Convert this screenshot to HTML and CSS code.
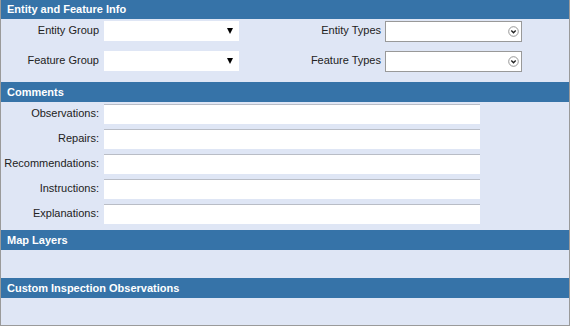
FILE: index.html
```html
<!DOCTYPE html>
<html>
<head>
<meta charset="utf-8">
<link rel="stylesheet" href="styles.css">
</head>
<body>
<div class="panel">
  <div class="hdr hdr-first">Entity and Feature Info</div>
  <div class="entity-grid">
    <div class="lbl">Entity Group</div>
    <div class="sel"><span class="tri"></span></div>
    <div class="lbl lbl-r">Entity Types</div>
    <div class="msel"><svg width="11" height="11" viewBox="0 0 11 11"><circle cx="5.5" cy="5.5" r="4.8" fill="#fff" stroke="#8a8a8a" stroke-width="0.9"/><path d="M3.3 4.6 L5.5 6.8 L7.7 4.6" fill="none" stroke="#222" stroke-width="1.4"/></svg></div>
    <div class="lbl">Feature Group</div>
    <div class="sel"><span class="tri"></span></div>
    <div class="lbl lbl-r">Feature Types</div>
    <div class="msel"><svg width="11" height="11" viewBox="0 0 11 11"><circle cx="5.5" cy="5.5" r="4.8" fill="#fff" stroke="#8a8a8a" stroke-width="0.9"/><path d="M3.3 4.6 L5.5 6.8 L7.7 4.6" fill="none" stroke="#222" stroke-width="1.4"/></svg></div>
  </div>
  <div class="hdr">Comments</div>
  <div class="comments">
    <div class="lbl">Observations:</div><div class="inp"></div>
    <div class="lbl">Repairs:</div><div class="inp"></div>
    <div class="lbl">Recommendations:</div><div class="inp"></div>
    <div class="lbl">Instructions:</div><div class="inp"></div>
    <div class="lbl">Explanations:</div><div class="inp"></div>
  </div>
  <div class="hdr">Map Layers</div>
  <div class="empty empty-a"></div>
  <div class="hdr">Custom Inspection Observations</div>
  <div class="empty empty-b"></div>
</div>
</body>
</html>
```
FILE: styles.css
```css
html, body {
  margin: 0;
  padding: 0;
  background: #ffffff;
}
.panel {
  width: 570px;
  height: 326px;
  box-sizing: border-box;
  border: 1px solid #9a9a9a;
  border-top: none;
  background: #dfe6f5;
  font-family: "Liberation Sans", Arial, sans-serif;
  font-size: 11px;
  color: #222;
  display: flex;
  flex-direction: column;
}
.hdr {
  height: 20px;
  line-height: 20px;
  background: #3673a8;
  color: #fff;
  font-weight: bold;
  padding-left: 6px;
}
.hdr-first {
  height: 19px;
  line-height: 18px;
}
.entity-grid {
  display: grid;
  grid-template-columns: 103px 135px 146px 137px;
  grid-auto-rows: 20px;
  row-gap: 10px;
  padding: 2px 0 11px;
}
.lbl {
  text-align: right;
  padding-right: 5px;
  line-height: 19px;
  white-space: nowrap;
}
.lbl-r {
  padding-right: 4px;
}
.sel {
  background: #fff;
  display: flex;
  align-items: center;
  justify-content: flex-end;
  padding-right: 6px;
}
.tri {
  width: 0;
  height: 0;
  border-left: 3px solid transparent;
  border-right: 3px solid transparent;
  border-top: 6px solid #000;
}
.msel {
  height: 21px;
  box-sizing: border-box;
  background: #fff;
  border: 1px solid #999;
  display: flex;
  align-items: center;
  justify-content: flex-end;
  padding-right: 2px;
}
.msel svg {
  display: block;
}
.comments {
  display: grid;
  grid-template-columns: 103px 376px;
  grid-auto-rows: 20px;
  row-gap: 5px;
  padding: 2px 0 6px;
}
.inp {
  background: #fff;
  box-sizing: border-box;
  border-top: 1px solid #b9bdc6;
}
.empty-a {
  height: 28px;
}
.empty-b {
  height: 27px;
}
```
